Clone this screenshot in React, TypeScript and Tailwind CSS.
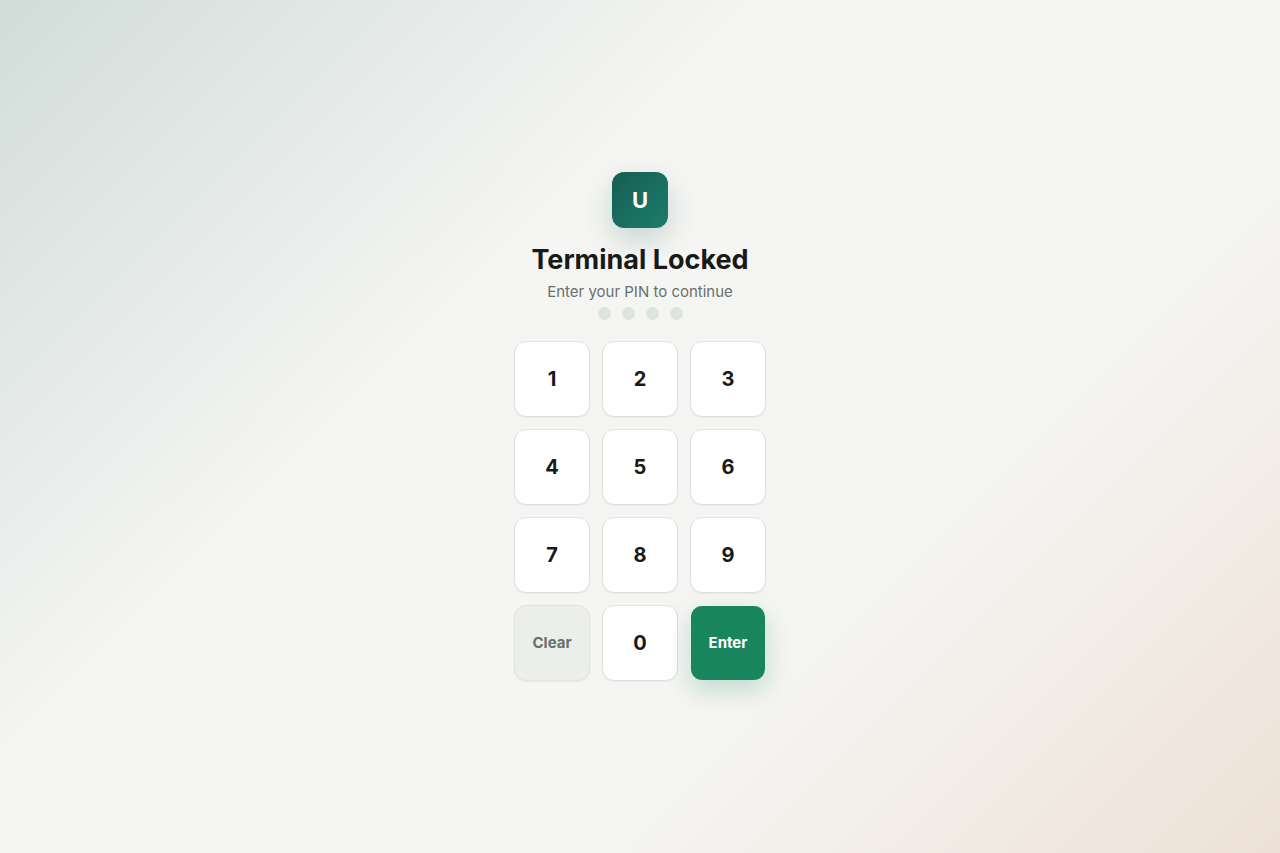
import { useState } from 'react';
import clsx from 'clsx';

const PIN_LENGTH = 4;
const DIGITS = ['1', '2', '3', '4', '5', '6', '7', '8', '9'];

function KeypadButton({
  label,
  variant = 'digit',
  onClick,
}: {
  label: string;
  variant?: 'digit' | 'clear' | 'enter';
  onClick: () => void;
}) {
  return (
    <button
      type="button"
      onClick={onClick}
      className={clsx(
        'flex size-19 items-center justify-center rounded-xl border bg-clip-padding font-bold',
        variant === 'digit' &&
          'border-[#dfe1dc] bg-white text-xl text-[#171a18] shadow-[0_1px_2px_rgba(20,30,25,0.05)]',
        variant === 'clear' &&
          'border-[#e0e3de] bg-[#eceeea] text-[15px] text-[#68706b] shadow-[0_1px_2px_rgba(20,30,25,0.05)]',
        variant === 'enter' &&
          'border-transparent bg-[#18855f] text-[15px] text-white shadow-[0_10px_24px_rgba(24,133,95,0.22)]',
      )}
    >
      {label}
    </button>
  );
}

export default function App() {
  const [pin, setPin] = useState('');

  const addDigit = (digit: string) => {
    setPin((current) => (current.length < PIN_LENGTH ? current + digit : current));
  };

  return (
    <main className="flex min-h-screen flex-col items-center justify-center bg-[#f5f5f3] bg-[linear-gradient(135deg,rgba(21,94,82,0.16),rgba(21,94,82,0)_36%),linear-gradient(315deg,rgba(190,105,40,0.14),rgba(190,105,40,0)_32%)] font-[Inter,sans-serif]">
      <div className="flex size-14 items-center justify-center rounded-xl bg-linear-135 from-[#155e52] to-[#1c7c6c] text-[22px] font-bold text-white shadow-[0_12px_28px_rgba(21,94,82,0.2)]">
        U
      </div>
      <h1 className="mt-4 text-[27px] leading-8 font-bold text-[#171a18]">Terminal Locked</h1>
      <p className="mt-1 text-[15px] leading-6 text-[#68706b]">Enter your PIN to continue</p>
      <div className="mt-[3px] flex gap-[11px]" role="status" aria-label="PIN digits entered">
        {Array.from({ length: PIN_LENGTH }, (_, i) => (
          <span
            key={i}
            className={clsx('size-[13px] rounded-full', i < pin.length ? 'bg-[#155e52]' : 'bg-[#dee5dc]')}
          />
        ))}
      </div>
      <div className="mt-[21px] grid grid-cols-3 gap-3">
        {DIGITS.map((digit) => (
          <KeypadButton key={digit} label={digit} onClick={() => addDigit(digit)} />
        ))}
        <KeypadButton label="Clear" variant="clear" onClick={() => setPin('')} />
        <KeypadButton label="0" onClick={() => addDigit('0')} />
        <KeypadButton label="Enter" variant="enter" onClick={() => setPin('')} />
      </div>
    </main>
  );
}
